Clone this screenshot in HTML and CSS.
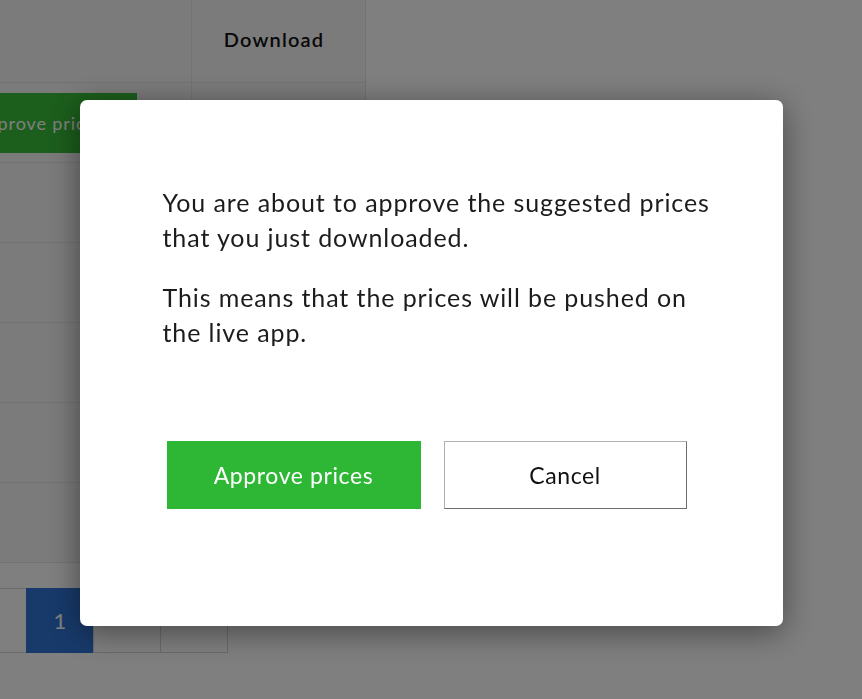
FILE: index.html
```html
<!DOCTYPE html>
<html lang="en">
<head>
    <meta charset="UTF-8">
    <meta name="viewport" content="width=device-width, initial-scale=1.0">
    <title>Suggested prices</title>
    <link rel="stylesheet" href="styles.css">
</head>
<body>
    <div class="page">
        <table class="prices">
            <tr>
                <th class="col-action"></th>
                <th class="col-download">Download</th>
            </tr>
            <tr>
                <td><button class="btn-approve-small">Approve prices</button></td>
                <td></td>
            </tr>
            <tr><td></td><td></td></tr>
            <tr><td></td><td></td></tr>
            <tr><td></td><td></td></tr>
            <tr><td></td><td></td></tr>
            <tr><td></td><td></td></tr>
        </table>

        <ul class="pagination">
            <li></li>
            <li class="active">1</li>
            <li></li>
            <li></li>
        </ul>
    </div>

    <div class="overlay">
        <div class="modal">
            <div class="modal-text">
                <p>You are about to approve the suggested prices that you just downloaded.</p>
                <p>This means that the prices will be pushed on the live app.</p>
            </div>
            <div class="modal-actions">
                <button class="btn btn-approve">Approve prices</button>
                <button class="btn btn-cancel">Cancel</button>
            </div>
        </div>
    </div>
</body>
</html>
```

FILE: styles.css
```css
body {
    margin: 0;
    background-color: #ffffff;
    font-family: Lato, 'Liberation Sans', sans-serif;
    color: #1c1c1c;
    overflow: hidden;
}

.page {
    margin-left: -60px;
}

.prices {
    border-collapse: collapse;
    background-color: #f6f6f6;
}

.prices th,
.prices td {
    border: 1px solid #e6e6e6;
    padding: 0;
    height: 79px;
    text-align: center;
}

.prices th {
    height: 78px;
    border-top: none;
    padding-bottom: 4px;
    font-size: 20px;
    font-weight: 600;
    letter-spacing: 1.2px;
    color: #111;
}

.col-action {
    width: 250px;
}

.prices th.col-download {
    width: 164px;
    padding-right: 9px;
}

.btn-approve-small {
    display: block;
    width: 196px;
    height: 60px;
    padding-left: 6px;
    border: none;
    background-color: #38bc38;
    color: #ffffff;
    font-family: Lato, 'Liberation Sans', sans-serif;
    font-size: 18px;
    letter-spacing: 0.9px;
}

.pagination {
    list-style: none;
    display: flex;
    margin: 25px 0 0 19px;
    padding: 0;
}

.pagination li {
    box-sizing: border-box;
    width: 68px;
    height: 65px;
    margin-right: -1px;
    border: 1px solid #d6d6d6;
    display: flex;
    align-items: center;
    justify-content: center;
    font-size: 22px;
    color: #333;
}

.pagination li.active {
    background-color: #2f74d6;
    border-color: #2f74d6;
    color: #ffffff;
}

/* dim layer over the whole page */
.overlay {
    position: fixed;
    top: 0;
    left: 0;
    right: 0;
    bottom: 0;
    background-color: rgba(0, 0, 0, 0.5);
    display: flex;
    justify-content: center;
    align-items: flex-start;
}

.modal {
    box-sizing: border-box;
    width: 703px;
    height: 526px;
    margin-top: 100px;
    padding: 85px 50px 0 83px;
    background-color: #ffffff;
    border-radius: 7px;
    box-shadow: 0 6px 32px rgba(0, 0, 0, 0.45);
}

.modal-text {
    width: 560px;
    font-size: 25px;
    line-height: 34.5px;
    letter-spacing: 0.9px;
}

.modal-text p {
    margin: 0 0 26px;
}

.modal-actions {
    display: flex;
    gap: 23px;
    margin-top: 92px;
    padding-left: 4px;
}

.btn {
    box-sizing: border-box;
    height: 68px;
    font-family: Lato, 'Liberation Sans', sans-serif;
    font-size: 23px;
    letter-spacing: 0.6px;
    cursor: pointer;
}

.btn-approve {
    width: 254px;
    border: none;
    background-color: #2eb734;
    color: #ffffff;
}

.btn-cancel {
    width: 243px;
    background-color: #ffffff;
    color: #111;
    border: 1px solid;
    border-color: #b0b0b0 #6c6c6c #6c6c6c #b0b0b0;
}
```
